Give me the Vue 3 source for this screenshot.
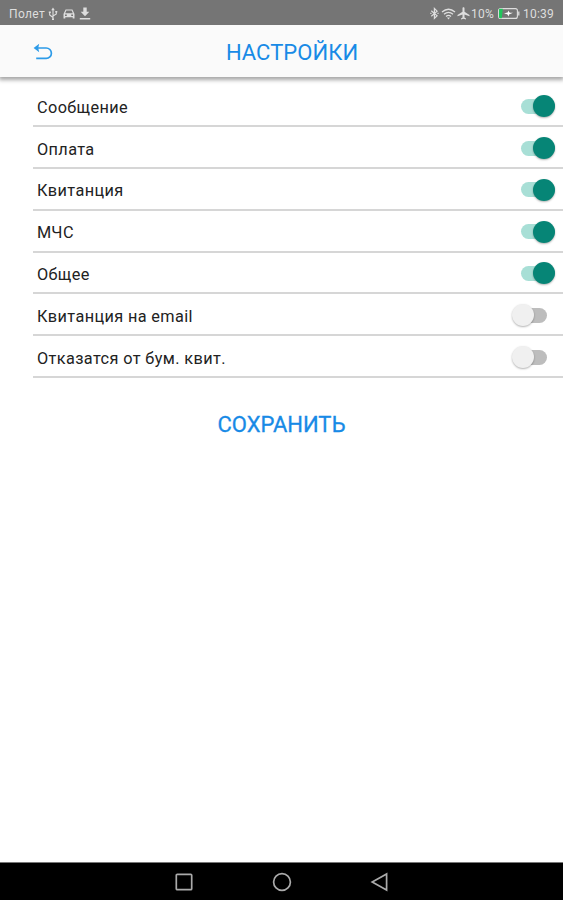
<script setup>
    import { ref } from "vue"

    const settings = ref([
        { id: 1, label: "Сообщение", enabled: true },
        { id: 2, label: "Оплата", enabled: true },
        { id: 3, label: "Квитанция", enabled: true },
        { id: 4, label: "МЧС", enabled: true },
        { id: 5, label: "Общее", enabled: true },
        { id: 6, label: "Квитанция на email", enabled: false },
        { id: 7, label: "Отказатся от бум. квит.", enabled: false },
    ])

    const toggle = (item) => {
        item.enabled = !item.enabled
    }
</script>

<template>
    <div class="screen">
        <div class="status-bar">
            <div class="status-left">
                <span class="carrier">Полет</span>
                <svg class="usb" width="10" height="14" viewBox="0 0 10 14" fill="none" stroke="currentColor" stroke-width="1.1">
                    <path d="M5 2v10M5 10.5L1.7 8V5M5 9l3.3-2V4.5" />
                    <path d="M5 .5l1.8 2.7H3.2zM.8 4.5h2v1.6h-2zM7.3 4h2v1.6h-2zM4 11.5h2v1.6H4z" fill="currentColor" stroke="none" />
                </svg>
                <svg class="car" width="12" height="10" viewBox="0 0 12 10" fill="currentColor">
                    <path fill-rule="evenodd" d="M2.6.5h6.8L11.5 5v4.5H9.7V8.3H2.3v1.2H.5V5zM3.3 1.6L2.2 4.3h7.6L8.7 1.6zM2 5.5v1.4h1.8V5.5zM8.2 5.5v1.4H10V5.5z" />
                </svg>
                <svg class="download" width="12" height="13" viewBox="0 0 12 13" fill="currentColor">
                    <path d="M4.3.5h3.4v4.2h2.6L6 9.2 1.7 4.7h2.6zM.8 11h10.4v1.5H.8z" />
                </svg>
            </div>
            <div class="status-right">
                <svg class="bluetooth" width="9" height="13" viewBox="0 0 9 13" fill="none" stroke="currentColor" stroke-width="1.2">
                    <path d="M1.3 3.7l5.8 5-2.7 2.7V1.5l2.7 2.7-5.8 5" />
                    <path d="M.3 6.4h1.2M7.4 6.4h1.2" />
                </svg>
                <svg class="wifi" width="15" height="12" viewBox="0 0 15 12" fill="none" stroke="currentColor" stroke-width="1.3">
                    <path d="M1 4c4-3.4 9-3.4 13 0M3 6.3c2.8-2.3 6.2-2.3 9 0M5 8.5c1.5-1.3 3.5-1.3 5 0" />
                    <path d="M6 9.6h3l-1.5 1.9z" fill="currentColor" stroke="none" />
                </svg>
                <svg class="plane" width="13" height="13" viewBox="0 0 13 13" fill="currentColor">
                    <path d="M6.5.3c.7 0 1 .5 1 1.2v3.2l5 3.2v1.3l-5-1.6v2.8l1.5 1.1v1l-2.5-.7-2.5.7v-1l1.5-1.1V7.6l-5 1.6V7.9l5-3.2V1.5c0-.7.3-1.2 1-1.2z" />
                </svg>
                <span class="percent">10%</span>
                <svg class="battery" width="22" height="11" viewBox="0 0 22 11" fill="none">
                    <rect x=".6" y=".6" width="18.8" height="9.8" rx="2" stroke="currentColor" stroke-width="1.1" />
                    <path d="M1 2c0-.8.3-1.2 1.1-1.2h2.7L3.8 10.2H2.1c-.8 0-1.1-.3-1.1-1.1z" fill="#20c65a" />
                    <path d="M20.8 3.5v4" stroke="currentColor" stroke-width="1.3" />
                    <path d="M6 5.5l4-1.2V2.5l1.8 2.2H15L11 6.4v2L9.2 6.2z" fill="#fff" />
                </svg>
                <span class="clock">10:39</span>
            </div>
        </div>

        <header class="header">
            <svg class="back" width="20" height="18" viewBox="0 0 20 18" fill="none" stroke="#2d9be8" stroke-width="1.7">
                <path d="M4 5h9.2a5.2 5.2 0 0 1 0 10.4H3.2" />
                <path d="M.6 5L6.2.7 5.2 5l1 4.3z" fill="#2d9be8" stroke="none" />
            </svg>
            <h1 class="title">НАСТРОЙКИ</h1>
        </header>

        <main class="content">
            <div
                v-for="item in settings"
                :key="item.id"
                class="row"
                @click="toggle(item)"
            >
                <span class="label">{{ item.label }}</span>
                <div class="switch" :class="{ on: item.enabled }">
                    <div class="thumb"></div>
                </div>
            </div>
            <button class="save">СОХРАНИТЬ</button>
        </main>

        <nav class="nav-bar">
            <svg width="20" height="20" viewBox="0 0 20 20">
                <rect x="2.3" y="2.3" width="15.4" height="15.4" rx="1" />
            </svg>
            <svg width="20" height="20" viewBox="0 0 20 20">
                <circle cx="10" cy="10" r="8.4" />
            </svg>
            <svg width="20" height="20" viewBox="0 0 20 20">
                <path d="M16.6 2v16L2.2 10z" />
            </svg>
        </nav>
    </div>
</template>

<style>
    body {
        margin: 0;
    }
</style>

<style scoped>
    .screen {
        display: flex;
        flex-direction: column;
        height: 900px;
        overflow: hidden;
        background-color: #fff;
        font-family: Roboto, "Liberation Sans", sans-serif;
    }

    .status-bar {
        display: flex;
        justify-content: space-between;
        height: 25px;
        padding: 2px 8px 0 9px;
        box-sizing: border-box;
        background-color: #757575;
        color: #dedede;
        font-size: 12px;
    }

    .status-left,
    .status-right {
        display: flex;
        align-items: center;
    }

    .carrier {
        width: 39px;
        letter-spacing: 0.35px;
    }

    .car {
        margin-left: 5px;
    }

    .download {
        margin-left: 4px;
    }

    .wifi {
        margin-left: 2px;
    }

    .plane {
        margin-left: 1px;
    }

    .percent {
        width: 26px;
        margin-left: 1px;
        letter-spacing: 0.3px;
    }

    .battery {
        margin-left: 1px;
    }

    .clock {
        width: 32px;
        margin-left: 3px;
        letter-spacing: 0.2px;
    }

    .header {
        display: flex;
        align-items: center;
        height: 52px;
        background-color: #fafafa;
        box-shadow: 0 2px 4px 1px rgba(0, 0, 0, 0.35);
        clip-path: inset(0 0 -8px 0);
    }

    .back {
        margin: 1px 0 0 33px;
    }

    .title {
        flex: 1;
        margin: 3px 32px 0 0;
        padding: 0;
        text-align: center;
        color: #188ae6;
        font-size: 22px;
        font-weight: 400;
        letter-spacing: 0.05px;
    }

    .content {
        display: flex;
        flex: 1;
        flex-direction: column;
        padding: 8.4px 0 0 33px;
    }

    .row {
        display: flex;
        align-items: center;
        justify-content: space-between;
        height: 41.8px;
        padding: 2px 8px 0 4px;
        box-sizing: border-box;
        border-bottom: 2px solid #d6d6d6;
        cursor: pointer;
    }

    .label {
        padding-top: 2px;
        color: #222;
        font-size: 16.3px;
        letter-spacing: 0.38px;
    }

    .switch {
        display: flex;
        align-items: center;
        width: 27px;
        height: 15px;
        margin-right: 8px;
        border-radius: 8px;
        background-color: #bdbdbd;
    }

    .thumb {
        width: 22px;
        height: 22px;
        flex-shrink: 0;
        margin-left: -8px;
        border-radius: 50%;
        background-color: #f0f0f0;
        box-shadow: 0 1px 2px rgba(0, 0, 0, 0.3);
    }

    .switch.on {
        justify-content: flex-end;
        margin-right: 0;
        width: 34px;
        background-color: #a8dfd6;
    }

    .switch.on .thumb {
        margin-left: 0;
        background-color: #068576;
    }

    .save {
        align-self: center;
        margin: 34px 33px 0 0;
        padding: 0;
        border: 0;
        background: none;
        color: #188ae6;
        font-family: inherit;
        font-size: 22px;
        letter-spacing: 0;
        -webkit-text-stroke: 0.3px #188ae6;
        cursor: pointer;
    }

    .nav-bar {
        display: flex;
        align-items: center;
        justify-content: center;
        gap: 78px;
        height: 38px;
        box-sizing: border-box;
        border-top: 1px solid #777;
        background-color: #000;
    }

    .nav-bar svg {
        fill: none;
        stroke: #aaa;
        stroke-width: 1.7;
    }
</style>
